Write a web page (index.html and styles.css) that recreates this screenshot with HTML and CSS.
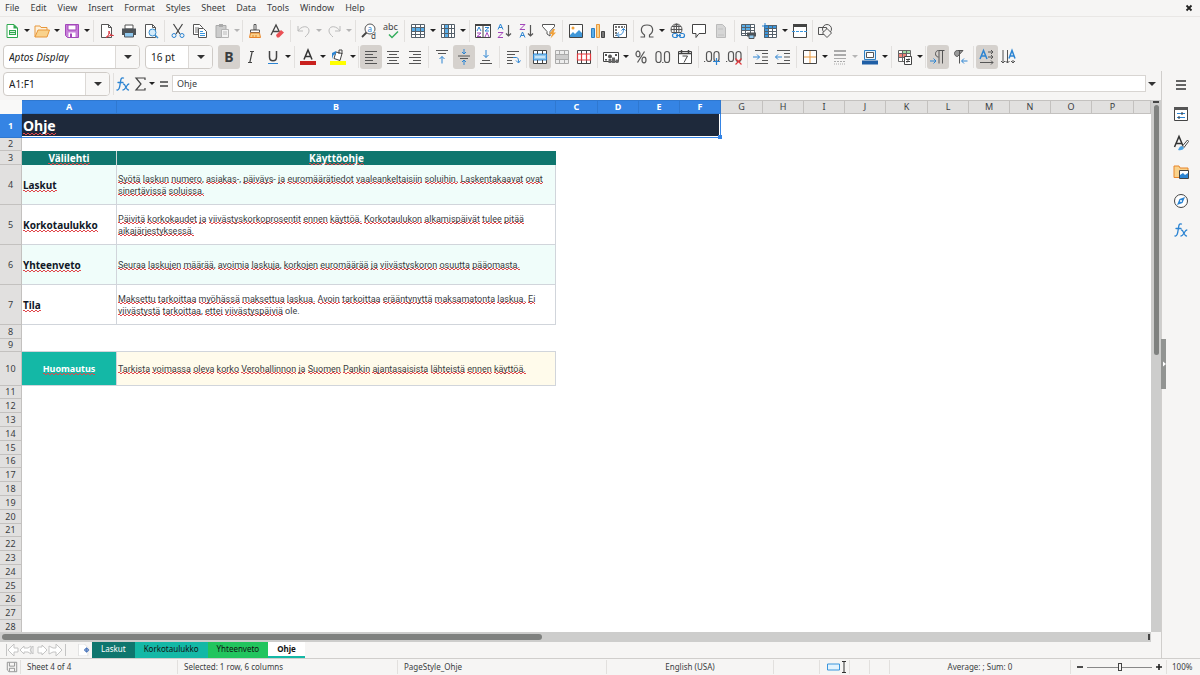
FILE: index.html
```html
<!DOCTYPE html>
<html lang="en">
<head>
<meta charset="utf-8">
<meta name="viewport" content="width=device-width, initial-scale=1">
<title>Ohje</title>
<link rel="stylesheet" href="styles.css">
</head>
<body>
<div class="app">
<header class="menubar">
  <nav class="menus">
    <button>File</button><button>Edit</button><button>View</button><button>Insert</button><button>Format</button><button>Styles</button><button>Sheet</button><button>Data</button><button>Tools</button><button>Window</button><button>Help</button>
  </nav>
  <button class="close" aria-label="Close document"><svg class="ic-s" viewBox="0 0 8 8"><path d="M1.5 1.500l5 5M6.500 1.500l-5 5" stroke="#222" stroke-width="1.8"/></svg></button>
</header>

<div class="toolbar" role="toolbar" aria-label="Standard">
  <button class="tb dd" aria-label="New"><svg class="ic" viewBox="0 0 16 16"><path d="M3 1.500h7l3.500 3.500v9.500H3z" fill="#fff" stroke="#2fa84f"/><path d="M9.500 1v4.500H14z" fill="#2fa84f"/><path d="M5 7h7v5H5z" fill="#2fa84f"/><path d="M6 8.500h5M6 10.500h5" stroke="#d6f2dc"/></svg></button>
  <button class="tb dd" aria-label="Open"><svg class="ic" viewBox="0 0 16 16"><path d="M1 14V3h5l1 1.500h6V7" fill="#fdf1dc" stroke="#e8973a"/><path d="M1 14L4 7h11.500L13 14z" fill="#f9d28c" stroke="#e8973a"/></svg></button>
  <button class="tb dd" aria-label="Save"><svg class="ic" viewBox="0 0 16 16"><path d="M1.500 1.500h13v13h-11l-2-2z" fill="#c77fd9" stroke="#a347ba"/><path d="M4 2h8v5H4z" fill="#fff" stroke="#a347ba"/><path d="M4.500 9.500h7V14h-7z" fill="#fff"/><path d="M6 10.500h2V14H6z" fill="#a347ba"/></svg></button>
  <i class="sep"></i>
  <button class="tb" aria-label="Export as PDF"><svg class="ic" viewBox="0 0 16 16"><path d="M2.500 1.500h7l3 3v10h-10z" fill="#fff" stroke="#555"/><path d="M9.500 1.500v3h3" fill="none" stroke="#555"/><path d="M7 14.500c2-1 3.500-4 3-6.500 0 3 2 4.500 4.500 4.500-3-.5-5 .5-7.500 2z" fill="#fff" stroke="#d8323c"/></svg></button>
  <button class="tb" aria-label="Print"><svg class="ic" viewBox="0 0 16 16"><path d="M4 2h8v4H4z" fill="#fff" stroke="#555"/><path d="M1 5.500h14V12H1z" fill="#4d5358"/><path d="M3.500 9.500h9V14h-9z" fill="#8fc8ef" stroke="#4d5358"/></svg></button>
  <button class="tb" aria-label="Print preview"><svg class="ic" viewBox="0 0 16 16"><path d="M2.500 1.500h7l3 3v10h-10z" fill="#fff" stroke="#555"/><path d="M9.500 1.500v3h3" fill="none" stroke="#555"/><circle cx="9.500" cy="9.500" r="3.500" fill="#d4ebfa" stroke="#3a8fd0"/><path d="M12 12l3 3" stroke="#3a8fd0" stroke-width="1.500"/></svg></button>
  <i class="sep"></i>
  <button class="tb" aria-label="Cut"><svg class="ic" viewBox="0 0 16 16" fill="none"><path d="M3.500 1L10 11M12.500 1L6 11" stroke="#444" stroke-width="1.200"/><circle cx="4" cy="12.500" r="2" stroke="#2c84d2"/><circle cx="12" cy="12.500" r="2" stroke="#2c84d2"/></svg></button>
  <button class="tb" aria-label="Copy"><svg class="ic" viewBox="0 0 16 16"><path d="M1.500 1.500h6l3 3v7h-9z" fill="#fff" stroke="#555"/><path d="M3 5h4M3 7h4M3 9h4" stroke="#777"/><path d="M6.500 5.500h5l3 3v6h-8z" fill="#fff" stroke="#555"/><path d="M8 8.500h3M8 10.500h5M8 12.500h5" stroke="#3a96dd"/></svg></button>
  <button class="tb dd off" aria-label="Paste"><svg class="ic" viewBox="0 0 16 16"><path d="M2 2.500h10v12H2z" fill="#ccc" stroke="#aaa"/><path d="M5 1h4v3H5z" fill="#aaa"/><path d="M7.500 6.500h7v8h-7z" fill="#f3f3f3" stroke="#b5b5b5"/><path d="M9 9h4M9 11h4" stroke="#bbb"/></svg></button>
  <i class="sep tight"></i>
  <button class="tb" aria-label="Clone formatting"><svg class="ic" viewBox="0 0 16 16"><path d="M7 1.500h2V7H7z" fill="#fff" stroke="#555"/><path d="M3.500 7h9v2.500h-9z" fill="#fff" stroke="#555"/><path d="M3.500 10h9l1 4.500h-11z" fill="#f9d28c" stroke="#e8852a"/><path d="M6 14v-2M9 14v-2" stroke="#e8852a"/></svg></button>
  <button class="tb" aria-label="Clear formatting"><svg class="ic" viewBox="0 0 16 16"><path d="M2 12L7 2l4 8M3.500 8.500h6" fill="none" stroke="#444" stroke-width="1.300"/><path d="M7 12l5-5 3 2.500-5 5H8z" fill="#ea5055"/></svg></button>
  <i class="sep"></i>
  <button class="tb dd off" aria-label="Undo"><svg class="ic" viewBox="0 0 16 16" fill="none" stroke="#bbb"><path d="M2 3v5h5M2 8c3-5 10-6 11-1 .5 3-2 5-4 7"/></svg></button>
  <button class="tb dd off" aria-label="Redo"><svg class="ic" viewBox="0 0 16 16" fill="none" stroke="#bbb"><path d="M14 3v5H9M14 8C11 3 4 2 3 7c-.5 3 2 5 4 7"/></svg></button>
  <i class="sep"></i>
  <button class="tb" aria-label="Find and replace"><svg class="ic" viewBox="0 0 16 16"><circle cx="9" cy="6" r="5" fill="#fff" stroke="#555"/><path d="M5.500 9.500L1 14" stroke="#444" stroke-width="1.800"/><text x="6.500" y="8.500" class="g8" fill="#2c84d2">a</text><text x="10" y="15.500" class="g8" fill="#444" stroke="#f6f5f4" stroke-width="1" paint-order="stroke">d</text></svg></button>
  <button class="tb" aria-label="Spelling"><svg class="ic" viewBox="0 0 16 16"><text x="0" y="7" class="g9" fill="#444">abc</text><path d="M6 11.500l3 3L15 8.500" fill="none" stroke="#35ae5d" stroke-width="1.500"/></svg></button>
  <i class="sep"></i>
  <button class="tb dd" aria-label="Row"><svg class="ic" viewBox="0 0 16 16"><path d="M1.500 1.500h13v13h-13z" fill="#fff"/><path d="M1.500 4.500h13v4h-13z" fill="#5aaee8"/><path d="M1.500 1.500h13v13h-13zM1.500 4.500h13M1.500 8.500h13M1.500 11.500h13M5.500 1v14M10.500 1v14" fill="none" stroke="#55606a"/></svg></button>
  <button class="tb dd" aria-label="Column"><svg class="ic" viewBox="0 0 16 16"><path d="M1.500 1.500h13v13h-13z" fill="#fff"/><path d="M4.500 1.500h4v13h-4z" fill="#5aaee8"/><path d="M1.500 1.500h13v13h-13zM1.500 5.500h13M1.500 10.500h13M4.500 1v14M8.500 1v14M11.500 1v14" fill="none" stroke="#55606a"/></svg></button>
  <i class="sep"></i>
  <button class="tb" aria-label="Sort"><svg class="ic" viewBox="0 0 16 16"><path d="M.5 1.500h15v13H.5z" fill="#fff" stroke="#444"/><path d="M0 1h16v2H0zM7.500 2h1v13h-1z" fill="#444"/><g fill="none"><path d="M2 8l2-4 2 4M10 4.500h4l-4 3.500h4" stroke="#2c84d2"/><path d="M2 10h4l-4 3.500h4M10 14l2-4.500 2 4.500" stroke="#a347ba"/></g></svg></button>
  <button class="tb" aria-label="Sort ascending"><svg class="ic" viewBox="0 0 16 16" fill="none"><path d="M1 6.500L3.500 1 6 6.500M2 4.500h3" stroke="#2c84d2"/><path d="M1 9.500h5L1 14.500h5" stroke="#a347ba"/><path d="M11.500 2v11M9 10.500l2.500 2.500 2.500-2.500" stroke="#555" stroke-width="1.200"/></svg></button>
  <button class="tb" aria-label="Sort descending"><svg class="ic" viewBox="0 0 16 16" fill="none"><path d="M1 1.500h5L1 6.500h5" stroke="#a347ba"/><path d="M1 14.500L3.500 9 6 14.500M2 12.500h3" stroke="#2c84d2"/><path d="M11.500 2v11M9 10.500l2.500 2.500 2.500-2.500" stroke="#555" stroke-width="1.200"/></svg></button>
  <button class="tb" aria-label="AutoFilter"><svg class="ic" viewBox="0 0 16 16"><path d="M1.500 1.500h12v2L9 8.500V13l-3-2V8.500L1.500 3.500z" fill="#fff" stroke="#555"/><path d="M12 6l-3.500 5H11l-1.500 4.500L15 9.500h-2.500L14 6z" fill="#f0a13a"/></svg></button>
  <i class="sep"></i>
  <button class="tb" aria-label="Insert image"><svg class="ic" viewBox="0 0 16 16"><path d="M1.500 1.500h13v13h-13z" fill="#fff" stroke="#444"/><circle cx="5" cy="5" r="1.500" fill="#f0a13a"/><path d="M2 14v-2l3-3 2 2 4-4 3 3v4z" fill="#3f97d8"/></svg></button>
  <button class="tb" aria-label="Insert chart"><svg class="ic" viewBox="0 0 16 16"><path d="M1.500 5.500h3v9h-3z" fill="#5aaee8" stroke="#2c7fc4"/><path d="M6.500 1.500h3v13h-3z" fill="#f9d28c" stroke="#e8973a"/><path d="M11.500 8.500h3v6h-3z" fill="#777" stroke="#444"/></svg></button>
  <button class="tb" aria-label="Pivot table"><svg class="ic" viewBox="0 0 16 16"><path d="M1.500 1.500h13v13h-13z" fill="#fff" stroke="#444"/><path d="M3 4h10M4 3v10" stroke="#777" stroke-dasharray="2 1" stroke-width="2"/><path d="M6 12c4 0 5.500-2 5.500-6M4.500 11.800L7 9.500M4.500 12l3 2M9.500 7.500l2-2 2 2" fill="none" stroke="#2c84d2"/></svg></button>
  <i class="sep"></i>
  <button class="tb dd" aria-label="Special character"><svg class="ic" viewBox="0 0 16 16"><path d="M1.500 14h4v-2C1 9 1 2 8 2s7 7 2.500 10v2h4" fill="none" stroke="#555" stroke-width="1.200"/></svg></button>
  <button class="tb" aria-label="Hyperlink"><svg class="ic" viewBox="0 0 16 16" fill="none"><g stroke="#555"><circle cx="7.500" cy="6.500" r="5.500"/><path d="M2 6.500h11M7.500 1v11M3 3.500h9M3 9.500h9"/><ellipse cx="7.500" cy="6.500" rx="2.500" ry="5.500"/></g><path d="M3 10h13v5H3z" fill="#f6f5f4"/><g stroke="#2c84d2" stroke-width="1.200"><rect x="3.500" y="10.500" width="5" height="4" rx="2"/><rect x="10.500" y="10.500" width="5" height="4" rx="2"/><path d="M7 12.500h5"/></g></svg></button>
  <button class="tb" aria-label="Comment"><svg class="ic" viewBox="0 0 16 16"><path d="M1.500 1.500h13v9H8l-3 4v-4H1.500z" fill="#fff" stroke="#444"/></svg></button>
  <button class="tb off" aria-label="Headers and footers"><svg class="ic" viewBox="0 0 16 16"><path d="M3.500 1.500h6l3 3v10h-9z" fill="#d6d6d6" stroke="#bbb"/><path d="M5 6h5M5 12h6" stroke="#c2c2c2"/></svg></button>
  <i class="sep"></i>
  <button class="tb" aria-label="Define print area"><svg class="ic" viewBox="0 0 16 16"><path d="M1.500 1.500h13v11h-13z" fill="#fff"/><path d="M1.500 1.500h9v6h-9z" fill="#5aaee8"/><path d="M1.500 1.500h13v11h-13zM1.500 4.500h13M1.500 7.500h13M1.500 10.500h13M5.500 1v12M10.500 1v12" fill="none" stroke="#55606a"/><path d="M7 9.500h9v4H7z" fill="#4d5358"/><path d="M9 12h5v3.500H9z" fill="#8fc8ef" stroke="#4d5358"/></svg></button>
  <button class="tb dd" aria-label="Freeze rows and columns"><svg class="ic" viewBox="0 0 16 16"><path d="M2.500 2.500h12v12h-12z" fill="#fff"/><path d="M2 2h13v3H2zM2 2h4v13H2z" fill="#3b97de"/><path d="M2.500 2.500h12v12h-12zM2.500 5.500h12M2.500 8.500h12M2.500 11.500h12M6.500 2v13M10.500 2v13" fill="none" stroke="#55606a"/><path d="M3 0v6M0 3h6" stroke="#2c84d2"/></svg></button>
  <button class="tb" aria-label="Split window"><svg class="ic" viewBox="0 0 16 16"><path d="M1.500 1.500h13v13h-13z" fill="#fff" stroke="#444"/><path d="M1 1h14v3H1z" fill="#444"/><path d="M0 8.500h16" stroke="#3a96dd" stroke-dasharray="3 1"/></svg></button>
  <i class="sep tight"></i>
  <button class="tb" aria-label="Draw functions"><svg class="ic" viewBox="0 0 16 16" fill="none" stroke="#555"><path d="M1.500 4.500h8v7h-8z"/><circle cx="10" cy="6" r="4.500"/><path d="M10 5.500l4.500 4.500-4.500 4.500L5.500 10z" fill="#f6f5f4"/></svg></button>
</div>

<div class="toolbar format" role="toolbar" aria-label="Formatting">
  <div class="combo font"><input class="italic" aria-label="Font name" value="Aptos Display"><button aria-label="Font list"><i class="car big"></i></button></div>
  <div class="combo size"><input aria-label="Font size" value="16 pt"><button aria-label="Size list"><i class="car big"></i></button></div>
  <button class="tb on bold" aria-label="Bold">B</button>
  <button class="tb" aria-label="Italic"><svg class="ic" viewBox="0 0 16 16"><path d="M7 2.500h4M5 13.500h4M9.200 2.500L6.800 13.500" stroke="#444" stroke-width="1.200"/></svg></button>
  <button class="tb dd" aria-label="Underline"><svg class="ic" viewBox="0 0 16 16"><path d="M4.500 2v6c0 5 7 5 7 0V2" fill="none" stroke="#444" stroke-width="1.500"/><path d="M3 14.500h10" stroke="#2c84d2"/></svg></button>
  <i class="sep"></i>
  <button class="tb dd" aria-label="Font color"><svg class="ic" viewBox="0 0 16 16"><path d="M4 10.500L8 1l4 9.500M5.500 7.500h5" fill="none" stroke="#333" stroke-width="1.500"/><path d="M0 12h16v4H0z" fill="#c9211e"/></svg></button>
  <button class="tb dd" aria-label="Highlighting color"><svg class="ic" viewBox="0 0 16 16"><path d="M6 3l6 1.500-2 7-6-2z" fill="#fff" stroke="#444"/><path d="M9 5V1h3v4" fill="none" stroke="#444"/><path d="M2 10V4l4-2v3L3.500 6z" fill="#2c84d2"/><path d="M0 12h16v4H0z" fill="#ff0"/></svg></button>
  <i class="sep tight"></i>
  <button class="tb on" aria-label="Align left"><svg class="ic ln" viewBox="0 0 16 16"><path d="M2 2.500h12M2 5.500h8M2 8.500h12M2 11.500h8M2 14.500h12"/></svg></button>
  <button class="tb" aria-label="Center horizontally"><svg class="ic ln" viewBox="0 0 16 16"><path d="M2 2.500h12M4 5.500h8M2 8.500h12M4 11.500h8M2 14.500h12"/></svg></button>
  <button class="tb" aria-label="Align right"><svg class="ic ln" viewBox="0 0 16 16"><path d="M2 2.500h12M6 5.500h8M2 8.500h12M6 11.500h8M2 14.500h12"/></svg></button>
  <i class="sep"></i>
  <button class="tb" aria-label="Align top"><svg class="ic ln" viewBox="0 0 16 16"><path d="M2 1.500h12M4 4.500h8"/><path class="bl" d="M8 14.500V7.500M5.500 10L8 7.500l2.500 2.500"/></svg></button>
  <button class="tb on" aria-label="Center vertically"><svg class="ic ln" viewBox="0 0 16 16"><path d="M2 7h12M4 9.500h8"/><path class="bl" d="M8 0v5M6 3l2 2 2-2M8 16v-5M6 13l2-2 2 2"/></svg></button>
  <button class="tb" aria-label="Align bottom"><svg class="ic ln" viewBox="0 0 16 16"><path d="M4 11.500h8M2 14.500h12"/><path class="bl" d="M8 1v7.500M5.500 6L8 8.500 10.500 6"/></svg></button>
  <i class="sep"></i>
  <button class="tb" aria-label="Wrap text"><svg class="ic ln" viewBox="0 0 16 16"><path d="M2 2.500h12M2 5.500h8M2 8.500h6M2 11.500h5M2 14.500h6"/><path class="bl" d="M8 8.500h3c2 0 2.500 1 2.500 5M11 11.500l2.500 2.500 2-2.500"/></svg></button>
  <i class="sep"></i>
  <button class="tb on" aria-label="Merge and center cells"><svg class="ic" viewBox="0 0 16 16"><path d="M1.500 1.500h13v13h-13z" fill="#fff" stroke="#444"/><path d="M1.500 5h13v6h-13z" fill="#8fc8ef" stroke="#2c84d2"/><path d="M5.500 1v4M10.500 1v4M5.500 11v4M10.500 11v4" stroke="#444"/><path d="M3 8h10" stroke="#fff"/></svg></button>
  <button class="tb off" aria-label="Merge cells"><svg class="ic" viewBox="0 0 16 16"><path d="M1.500 1.500h13v13h-13z" fill="#ededed" stroke="#aaa"/><path d="M1.500 5.500h13M1.500 10.500h13M5.500 1v14M10.500 1v14" stroke="#aaa"/><path d="M2 6h12v4H2z" fill="#ccc"/></svg></button>
  <button class="tb" aria-label="Unmerge cells"><svg class="ic" viewBox="0 0 16 16"><path d="M1.500 1.500h13v13h-13z" fill="#fff" stroke="#444"/><path d="M5.500 1v4M10.500 1v4M5.500 11v4M10.500 11v4" stroke="#444"/><path d="M1.500 5h13v6h-13zM5.500 5v6M10.500 5v6" fill="none" stroke="#e0393e" stroke-width="1.200"/></svg></button>
  <i class="sep"></i>
  <button class="tb dd" aria-label="Format as currency"><svg class="ic" viewBox="0 0 16 16"><path d="M.5 3.500h15v9H.5z" fill="#fff" stroke="#444"/><circle cx="7" cy="7.500" r="2" fill="#555"/><path d="M2 5h2v2H2zM12 5h2v2h-2zM2 10h2v1.500H2z" fill="#555"/><path d="M5.500 10h3v4h-3zM9 8.500h3V14H9zM12.500 10.500h3V14h-3z" fill="#666"/></svg></button>
  <button class="tb" aria-label="Format as percent"><svg class="ic" viewBox="0 0 16 16" fill="none" stroke="#555" stroke-width="1.200"><ellipse cx="5" cy="5" rx="2" ry="2.800"/><ellipse cx="11" cy="11" rx="2" ry="2.800"/><path d="M11.500 2.500l-7 11"/></svg></button>
  <button class="tb" aria-label="Format as number"><svg class="ic" viewBox="0 0 16 16" fill="none" stroke="#555" stroke-width="1.200"><rect x="1" y="2.500" width="5" height="11" rx="2.500"/><rect x="9.500" y="2.500" width="5" height="11" rx="2.500"/><path d="M7.200 13.500h1.200"/></svg></button>
  <button class="tb" aria-label="Format as date"><svg class="ic" viewBox="0 0 16 16" fill="none" stroke="#444"><path d="M1.500 2.500h13v12h-13z" fill="#fff"/><path d="M1.500 4.500h13M4.500 1v3M11.500 1v3" stroke-width="1.500"/><path d="M5.500 7h5l-3.500 6.500"/></svg></button>
  <i class="sep"></i>
  <button class="tb" aria-label="Add decimal place"><svg class="ic" viewBox="0 0 16 16" fill="none" stroke="#555" stroke-width="1.200"><path d="M0 12.500h1.200"/><rect x="2.500" y="2.500" width="5" height="10" rx="2.500"/><rect x="10" y="2.500" width="5" height="10" rx="2.500"/><path d="M9 12.500h7M12.500 9v7" stroke="#2c84d2"/></svg></button>
  <button class="tb" aria-label="Delete decimal place"><svg class="ic" viewBox="0 0 16 16" fill="none" stroke="#555" stroke-width="1.200"><path d="M0 12.500h1.200"/><rect x="2.500" y="2.500" width="5" height="10" rx="2.500"/><rect x="10" y="2.500" width="5" height="10" rx="2.500"/><path d="M9.500 9.500l6 6M15.500 9.500l-6 6" stroke="#e0393e"/></svg></button>
  <i class="sep"></i>
  <button class="tb" aria-label="Increase indent"><svg class="ic ln" viewBox="0 0 16 16"><path d="M2 1.500h13M9 4.500h6M9 8h6M9 11.500h6M2 14.500h13"/><path class="bl" d="M0 8h6.500M4 5.500L6.500 8 4 10.500"/></svg></button>
  <button class="tb" aria-label="Decrease indent"><svg class="ic ln" viewBox="0 0 16 16"><path d="M2 1.500h13M9 4.500h6M9 8h6M9 11.500h6M2 14.500h13"/><path class="bl" d="M7 8H.5M3 5.500L.5 8 3 10.500"/></svg></button>
  <i class="sep"></i>
  <button class="tb dd" aria-label="Borders"><svg class="ic" viewBox="0 0 16 16" fill="none"><path d="M1.500 1.500h13v13h-13z" fill="#fff" stroke="#444"/><path d="M8 2v12M2 8h12" stroke="#e8973a"/></svg></button>
  <button class="tb dd off" aria-label="Border style"><svg class="ic" viewBox="0 0 16 16" stroke="#aaa"><path d="M2 2h12" stroke-width="2"/><path d="M2 6h12" stroke-width="2"/><path d="M2 9.500h12"/><path d="M2 12.500h12" stroke-dasharray="2 1"/><path d="M2 15h12" stroke-dasharray="1 1"/></svg></button>
  <button class="tb dd" aria-label="Border color"><svg class="ic" viewBox="0 0 16 16"><path d="M2.500 1.500h11v9h-11z" fill="#e7f3fc" stroke="#2c7fc4"/><path d="M4.500 3.500h7v5h-7z" fill="#fff" stroke="#555"/><path d="M0 11.500h16v4H0z" fill="#1f5fa6"/></svg></button>
  <i class="sep"></i>
  <button class="tb dd" aria-label="Conditional formatting"><svg class="ic" viewBox="0 0 16 16"><path d="M1.500 1.500h12v11h-12z" fill="#fff"/><path d="M5 2h8v3H5z" fill="#a4e0a8"/><path d="M2 5h7v4H2z" fill="#f0857b"/><path d="M1.500 1.500h12v11h-12zM1.500 4.500h12M1.500 8.500h12M5.500 1v12M9.500 1v12" fill="none" stroke="#666"/><path d="M7.500 7.500h7v8h-7z" fill="#fff" stroke="#444"/><path d="M9 10.500h4M9 12.500h4M12 9.500l-2 4" stroke="#444"/></svg></button>
  <i class="sep tight"></i>
  <button class="tb on" aria-label="Left-to-right"><svg class="ic ln" viewBox="0 0 16 16"><path d="M14.500 1.500H8.500c-4 0-4 6.500 0 6.500M9 1.500V14.500M12.500 1.500V14.500"/><path class="bl" d="M0 12h6M3.500 9.500L6 12l-2.500 2.500"/></svg></button>
  <button class="tb" aria-label="Right-to-left"><svg class="ic ln" viewBox="0 0 16 16"><path d="M11 1.500H5.500c-4 0-4 6 0 6zM7.500 1.500V14.500" fill="#999"/><path class="bl" d="M15.500 12H10M12 9.500L9.500 12l2.500 2.500"/></svg></button>
  <i class="sep"></i>
  <button class="tb on" aria-label="Text direction from left to right"><svg class="ic ln" viewBox="0 0 16 16"><path class="bl" stroke-width="1.500" d="M1 10L4.500 1.500 8 10M2.500 7h4"/><path d="M9 3h5M12 1l2 2-2 2M9 8h5M12 6l2 2-2 2M1 13.500h13M12 11.500l2 2-2 2"/></svg></button>
  <button class="tb" aria-label="Text direction from top to bottom"><svg class="ic ln" viewBox="0 0 16 16"><path class="bl" stroke-width="1.500" d="M8 9.500l3-8 3 8M9.500 7h4"/><path d="M2 1v13M0 12l2 2 2-2M6.500 1v13M4.500 12l2 2 2-2M12 11v3M10 12l2 2 2-2"/></svg></button>
</div>

<div class="workspace">
<main class="main">
  <div class="formula">
    <div class="combo name"><input aria-label="Name box" value="A1:F1"><button aria-label="Named ranges"><i class="car big"></i></button></div>
    <i class="sep tight"></i>
    <button class="fb" aria-label="Function wizard"><svg class="ic" viewBox="0 0 16 16"><use href="#fx"/></svg></button>
    <button class="fb sum" aria-label="Select function"><svg class="ic" viewBox="0 0 16 16"><path d="M12 4V2H3l5 6-5 6h9v-2" fill="none" stroke="#444" stroke-width="1.200"/></svg><i class="car"></i></button>
    <button class="fb" aria-label="Formula"><svg class="ic" viewBox="0 0 16 16"><path d="M4 6h8M4 10h8" stroke="#444" stroke-width="1.600"/></svg></button>
    <input class="line" aria-label="Input line" value="Ohje">
    <button class="fb expand" aria-label="Expand formula bar"><i class="car big"></i></button>
  </div>

  <div class="gridwrap">
    <div class="grid">
      <table class="sheet">
        <colgroup><col class="c0"><col class="ca"><col class="cb"><col class="w"><col class="n"><col class="n"><col class="n"><col class="w"><col class="n"><col class="n"><col class="n"><col class="w"><col class="n"><col class="n"><col class="n"><col class="n"><col class="w"><col></colgroup>
        <thead><tr><th class="corner"></th><th class="s">A</th><th class="s">B</th><th class="s">C</th><th class="s">D</th><th class="s">E</th><th class="s">F</th><th>G</th><th>H</th><th>I</th><th>J</th><th>K</th><th>L</th><th>M</th><th>N</th><th>O</th><th>P</th><th></th></tr></thead>
        <tbody>
          <tr class="r1"><th class="s">1</th><td class="title" colspan="6"><u>Ohje</u><i class="handle"></i></td><td colspan="11"></td></tr>
          <tr class="short"><th>2</th><td colspan="17"></td></tr>
          <tr class="heads"><th>3</th><td><u>Välilehti</u></td><td><u>Käyttöohje</u></td><td colspan="15"></td></tr>
          <tr class="info mint"><th>4</th><td><u>Laskut</u></td><td><u>Syötä</u> <u>laskun</u> <u>numero</u>, <u>asiakas</u>-, <u>päiväys</u>- <u>ja</u> <u>euromäärätiedot</u> <u>vaaleankeltaisiin</u> <u>soluihin.</u> <u>Laskentakaavat</u> <u>ovat</u> <u>sinertävissä</u> <u>soluissa.</u></td><td colspan="15"></td></tr>
          <tr class="info"><th>5</th><td><u>Korkotaulukko</u></td><td><u>Päivitä</u> <u>korkokaudet</u> <u>ja</u> <u>viivästyskorkoprosentit</u> <u>ennen</u> <u>käyttöä.</u> <u>Korkotaulukon</u> <u>alkamispäivät</u> <u>tulee</u> <u>pitää</u> <u>aikajärjestyksessä.</u></td><td colspan="15"></td></tr>
          <tr class="info mint"><th>6</th><td><u>Yhteenveto</u></td><td><u>Seuraa</u> <u>laskujen</u> <u>määrää</u>, <u>avoimia</u> <u>laskuja</u>, <u>korkojen</u> <u>euromäärää</u> <u>ja</u> <u>viivästyskoron</u> <u>osuutta</u> <u>pääomasta.</u></td><td colspan="15"></td></tr>
          <tr class="info"><th>7</th><td><u>Tila</u></td><td><u>Maksettu</u> <u>tarkoittaa</u> <u>myöhässä</u> <u>maksettua</u> <u>laskua.</u> <u>Avoin</u> <u>tarkoittaa</u> <u>erääntynyttä</u> <u>maksamatonta</u> <u>laskua.</u> <u>Ei</u> <u>viivästystä</u> <u>tarkoittaa</u>, <u>ettei</u> <u>viivästyspäiviä</u> ole.</td><td colspan="15"></td></tr>
          <tr><th>8</th><td colspan="17"></td></tr>
          <tr class="short before"><th>9</th><td colspan="2"></td><td colspan="15"></td></tr>
          <tr class="note"><th>10</th><td><u>Huomautus</u></td><td><u>Tarkista</u> <u>voimassa</u> <u>oleva</u> <u>korko</u> <u>Verohallinnon</u> <u>ja</u> <u>Suomen</u> <u>Pankin</u> <u>ajantasaisista</u> <u>lähteistä</u> <u>ennen</u> <u>käyttöä.</u></td><td colspan="15"></td></tr>
          <tr class="short"><th>11</th><td colspan="17"></td></tr><tr><th>12</th><td colspan="17"></td></tr><tr><th>13</th><td colspan="17"></td></tr><tr><th>14</th><td colspan="17"></td></tr><tr><th>15</th><td colspan="17"></td></tr><tr class="short"><th>16</th><td colspan="17"></td></tr><tr><th>17</th><td colspan="17"></td></tr><tr><th>18</th><td colspan="17"></td></tr><tr><th>19</th><td colspan="17"></td></tr><tr><th>20</th><td colspan="17"></td></tr><tr class="short"><th>21</th><td colspan="17"></td></tr><tr><th>22</th><td colspan="17"></td></tr><tr><th>23</th><td colspan="17"></td></tr><tr><th>24</th><td colspan="17"></td></tr><tr><th>25</th><td colspan="17"></td></tr><tr class="short"><th>26</th><td colspan="17"></td></tr><tr><th>27</th><td colspan="17"></td></tr><tr><th>28</th><td colspan="17"></td></tr>
        </tbody>
      </table>
    </div>
    <div class="vscroll"><i class="split"></i><i class="thumb"></i></div>
  </div>
  <div class="hscroll"><i class="thumb"></i><i class="split"></i></div>

  <div class="tabs">
    <svg class="navs" viewBox="0 0 62 14" fill="#fff" stroke="#c4c4c4" role="img" aria-label="Sheet navigation"><path d="M1.500 1v12M3 7l6-6v4h4v4H9v4zM15 7l4-4v2h4l3-2v8l-3-2h-4v2zM28 3v8l-3-4zM33 4h4V2l5 5-5 5v-2h-4zM44 3l4 2h3V1l6 6-6 6V9h-3l-4 2zM60.500 1v12"/></svg>
    <button class="add" aria-label="Add sheet"><svg class="addic" viewBox="0 0 14 14"><path d="M.5 0h7l4 4v10H.5z" fill="#fff" stroke="#ddd"/><circle cx="10" cy="7" r="2" fill="#fff" stroke="#2a5db0"/><path d="M10 4v6M7 7h6" stroke="#2a5db0" stroke-width=".8"/></svg></button>
    <button class="tab t1">Laskut</button><button class="tab t2">Korkotaulukko</button><button class="tab t3">Yhteenveto</button><button class="tab cur">Ohje</button>
  </div>
</main>

<aside class="side">
  <button class="collapse" aria-label="Hide sidebar"><svg class="ic-s" viewBox="0 0 8 8"><path d="M2 1.500l3 2.500-3 2.500z" fill="#fff"/></svg></button>
  <button class="sb" aria-label="Sidebar settings"><svg class="ic" viewBox="0 0 16 16"><path d="M3 4h10M3 8h10M3 12h10" stroke="#333" stroke-width="1.600"/></svg></button>
  <button class="sb" aria-label="Properties"><svg class="ic" viewBox="0 0 16 16"><path d="M1.500 1.500h13v13h-13z" fill="#fff" stroke="#444"/><path d="M1 1h14v3H1z" fill="#555"/><path d="M4 7.500h8M4 11.500h8" stroke="#2c84d2"/><path d="M9 6v3M6 10v3" stroke="#333"/></svg></button>
  <button class="sb" aria-label="Styles"><svg class="ic" viewBox="0 0 16 16"><path d="M1.500 12L6 1.500 10 11M3 8.500h5.500" fill="none" stroke="#333" stroke-width="1.500"/><path d="M14.500 5l-5 6 1.500 1.500 4.500-6z" fill="#fff" stroke="#444"/><path d="M5 15c1-1 1-4 4-4l2 2c-1 2-3 2.500-6 2z" fill="#4ba3e3"/></svg></button>
  <button class="sb" aria-label="Gallery"><svg class="ic" viewBox="0 0 16 16"><path d="M1 13.500V2h5l1 2h8v9.500z" fill="#f9d28c" stroke="#e8852a"/><path d="M6.500 6.500h9v8h-9z" fill="#fff" stroke="#444"/><path d="M7 14v-3l3-2 2 2 3-2v5z" fill="#2c84d2"/></svg></button>
  <button class="sb" aria-label="Navigator"><svg class="ic" viewBox="0 0 16 16"><circle cx="8" cy="8" r="6.500" fill="#fff" stroke="#444"/><path d="M12 4l-2.500 6L4 12l2.500-6z" fill="#2c84d2"/><circle cx="8" cy="8" r="1" fill="#fff"/></svg></button>
  <button class="sb" aria-label="Functions"><svg class="ic" viewBox="0 0 16 16"><g id="fx" fill="none" stroke="#2c84d2" stroke-width="1.300" stroke-linecap="round"><path d="M8.500 2C5.800 1 5.800 4 5.300 7S4.500 14.500 2 14M3 6.500h5"/><path d="M8.500 8c2 0 2.500 6 5 6M13.800 8c-2 0-3.300 6-5.800 6"/></g></svg></button>
</aside>
</div>

<footer class="status">
  <span class="c-save"><svg class="addic" viewBox="0 0 14 14" fill="none" stroke="#888"><path d="M1.500 1.500h11v11h-9l-2-2zM4 2v4h6V2M4 12V8.500h6V12"/></svg></span>
  <span class="c-sheet">Sheet 4 of 4</span>
  <span class="c-sel">Selected: 1 row, 6 columns</span>
  <span class="c-page">PageStyle_Ohje</span>
  <span class="c-lang">English (USA)</span>
  <span class="c-gap"></span>
  <span class="c-mode"><svg class="modes" viewBox="0 0 22 12" fill="none"><path d="M1.500 3h12v6h-12z" fill="#e3f3fd" stroke="#3a96dd"/><path d="M16 .500h4M16 11.500h4M18 .500v11" stroke="#333"/></svg></span>
  <span class="c-a"></span>
  <span class="c-b"></span>
  <span class="c-avg">Average: ; Sum: 0</span>
  <span class="c-zoom"><button aria-label="Zoom out"><svg class="ic-s" viewBox="0 0 8 8"><path d="M1 4h6" stroke="#222" stroke-width="1.600"/></svg></button><input type="range" min="0" max="100" value="50" aria-label="Zoom"><button aria-label="Zoom in"><svg class="ic-s" viewBox="0 0 8 8"><path d="M1 4h6M4 1v6" stroke="#222" stroke-width="1.600"/></svg></button></span>
  <span class="c-pct">100%</span>
</footer>
</div>
</body>
</html>
```
FILE: styles.css
```css
* { box-sizing: border-box; }
body {
  margin: 0;
  background: #f6f5f4;
  color: #3a3d3f;
  font: 9px/12px "Noto Sans", "Open Sans", sans-serif;
}
button, input { font: inherit; color: inherit; margin: 0; padding: 0; border: 0; background: none; }
svg { display: block; flex: none; }
.app { display: flex; flex-direction: column; height: 100vh; overflow: hidden; }
.ic { width: 16px; height: 16px; overflow: visible; }
.ic-s { width: 8px; height: 8px; }
.addic { width: 12px; height: 12px; }
.g8 { font-size: 8px; }
.g9 { font-size: 9px; }
.ln { fill: none; stroke: #555; }
.bl { stroke: #2c84d2; }

.menubar { display: flex; justify-content: space-between; align-items: center; height: 17px; padding-right: 7px; border-bottom: 1px solid #e9e7e5; }
.menus { display: flex; gap: 1px; }
.menus button { padding: 0 5px; }

.toolbar { display: flex; align-items: center; height: 27px; padding-left: 1px; }
.format { padding: 0 0 2px 3px; }
.tb { display: flex; align-items: center; justify-content: center; flex: none; width: 22px; height: 24px; border-radius: 3px; }
.tb.on { background: #d5d1cd; }
.tb.bold { font-size: 14px; font-weight: 700; line-height: 24px; }
.tb.dd { width: 30px; justify-content: flex-start; padding-left: 3px; gap: 4px; }
.tb.dd::after, .car { content: ""; flex: none; border: solid transparent; border-width: 3px 3px 0; border-top-color: #222; height: 0; }
.tb.dd.off::after { border-top-color: #b5b5b5; }
.car.big { border-width: 4px 4px 0; border-top-color: #333; }
.sep { flex: none; width: 1px; height: 22px; margin: 0 2px; background: #e2e0de; }
.sep.tight { margin: 0 1px; }

.combo { display: flex; flex: none; height: 24px; border: 1px solid #cfcbc7; border-radius: 4px; background: #fff; overflow: hidden; }
.combo input { flex: 1; min-width: 0; padding-left: 5px; color: #222; font-size: 10px; }
.combo button { display: flex; align-items: center; justify-content: center; width: 24px; border-left: 1px solid #dcd9d6; background: #f8f7f6; }
.italic { font-style: italic; }
.font { width: 137px; margin-right: 5px; }
.size { width: 68px; margin-right: 5px; }
.name { width: 107px; margin-right: 2px; }

.workspace { display: flex; flex: 1; min-height: 0; }
.main { display: flex; flex-direction: column; flex: 1; min-width: 0; }
.formula { display: flex; align-items: center; height: 29px; padding: 0 3px 4px 3px; }
.fb { display: flex; align-items: center; justify-content: center; flex: none; width: 16px; height: 20px; }
.fb.sum { width: 25px; }
.line { flex: 1; min-width: 0; height: 17px; padding-left: 4px; border: 1px solid #d8d5d2; background: #fff; }
.fb.expand { width: 12px; }

.gridwrap { display: flex; flex: 1; min-height: 0; }
.grid { flex: 1; min-width: 0; overflow: hidden; background: #fff; }
.sheet { width: 100%; table-layout: fixed; border-spacing: 0; }
.c0 { width: 22px; }
.ca { width: 95px; }
.cb { width: 439px; }
.n { width: 41px; }
.w { width: 42px; }
.sheet th, .sheet td { padding: 0 1px; }
.sheet th { border: solid #c3c1bf; border-width: 0 1px 1px 0; background: #e1e0df; font-weight: 400; line-height: 13px; }
.sheet thead th { height: 14px; border-top: 1px solid #c3c1bf; line-height: 12px; }
.sheet th.s { background: #3584e4; border-color: #2f78d0; color: #fff; font-weight: 700; }
.sheet th.corner { background: #f9f9f8; border-color: #f9f9f8; }
.sheet tbody tr { height: 14px; }
.sheet tbody .short { height: 13px; }
.sheet .short th { line-height: 12px; }
.sheet tbody .r1 { height: 24px; }
.sheet tbody .info { height: 40px; }
.sheet tbody .note { height: 34px; }
.sheet .title { position: relative; background: #1e293b; border-bottom: 1px solid #3584e4; border-right: 1px solid #3584e4; box-shadow: inset -1px -1px #fff; color: #fff; font-size: 14px; font-weight: 700; line-height: 18px; }
.handle { position: absolute; right: -2px; bottom: -2px; width: 4px; height: 4px; background: #3584e4; }

.heads td:nth-child(-n+3) { background: #0f766e; color: #fff; font-weight: 700; font-size: 10px; line-height: 13px; text-align: center; }
.heads td:nth-child(2) { border-right: 1px solid #cfd8d7; }
.info td:nth-child(-n+3), .note td:nth-child(-n+3) { border: solid #d1d5db; border-width: 0 1px 1px 0; }
.info td:nth-child(2) { font-size: 10px; font-weight: 700; color: #111827; }
.info td:nth-child(3), .note td:nth-child(3) { font-family: Roboto, "Noto Sans", sans-serif; }
.mint td:nth-child(-n+3) { background: #f0fdfa; }
.before td:nth-child(2) { border-bottom: 1px solid #d1d5db; }
.note td:nth-child(2) { background: #14b8a6; color: #fff; font-weight: 700; text-align: center; }
.note td:nth-child(3) { background: #fffbeb; }
.sheet u {
  text-decoration: none;
  background:
    repeating-linear-gradient(90deg, #e0474c 0 2px, transparent 2px 4px) 0 calc(100% - 1px) / 100% 1px no-repeat,
    repeating-linear-gradient(90deg, transparent 0 2px, #e0474c 2px 4px) 0 100% / 100% 1px no-repeat;
}

.vscroll { display: flex; flex-direction: column; align-items: center; width: 10px; background: #cdcdcc; }
.vscroll .split { width: 6px; height: 2px; margin: 1px 0 2px; background: #444; }
.vscroll .thumb { width: 5px; height: 47%; border-radius: 3px; background: #7f817f; }
.hscroll { display: flex; align-items: center; justify-content: space-between; height: 10px; margin-right: 10px; padding: 0 1px 0 2px; background: #cdcdcc; }
.hscroll .thumb { width: 47%; height: 6px; border-radius: 3px; background: #7f817f; }
.hscroll .split { width: 2px; height: 6px; background: #444; }

.tabs { display: flex; height: 16px; padding-left: 5px; }
.navs { width: 62px; height: 14px; margin-top: 1px; }
.add { width: 25px; padding-left: 11px; }
.tab { padding: 0 9px; border-bottom: 2px solid transparent; color: #111; font-size: 8px; line-height: 14px; }
.t1 { background: #0f766e; color: #fff; }
.t2 { background: #14b8a6; }
.t3 { background: #22c55e; }
.cur { background: #fff; border-color: #14b8a6; font-weight: 700; }

.side { position: relative; display: flex; flex-direction: column; align-items: center; width: 39px; padding-top: 4px; border-left: 1px solid #d0cecc; }
.sb { display: flex; align-items: center; justify-content: center; width: 24px; height: 20px; margin-bottom: 9px; }
.collapse { position: absolute; left: -1px; top: 268px; display: flex; align-items: center; width: 5px; height: 50px; background: #929492; overflow: hidden; }

.status { display: flex; height: 17px; border-top: 1px solid #d0cecc; font-size: 8px; line-height: 14px; white-space: nowrap; }
.status > span { display: flex; align-items: center; margin: 1px 0; padding-left: 6px; border-right: 1px solid #e2e0de; }
.c-save { width: 21px; }
.c-sheet { width: 157px; }
.c-sel { width: 220px; }
.c-page { width: 209px; }
.status .c-lang { width: 167px; justify-content: center; padding: 0; }
.c-gap { width: 46px; }
.c-mode { width: 30px; }
.modes { width: 22px; height: 12px; }
.c-a, .c-b { width: 20px; }
.status .c-avg { flex: 1; justify-content: center; padding: 0; }
.status .c-zoom { width: 96px; gap: 3px; padding-left: 5px; }
.status .c-pct { width: 33px; border: 0; padding-left: 5px; }
.c-zoom input { width: 65px; height: 10px; appearance: none; background: linear-gradient(#888, #888) center / 100% 1px no-repeat; }
.c-zoom input::-webkit-slider-thumb { appearance: none; width: 4px; height: 8px; border: 1px solid #444; background: #f6f5f4; }
```
